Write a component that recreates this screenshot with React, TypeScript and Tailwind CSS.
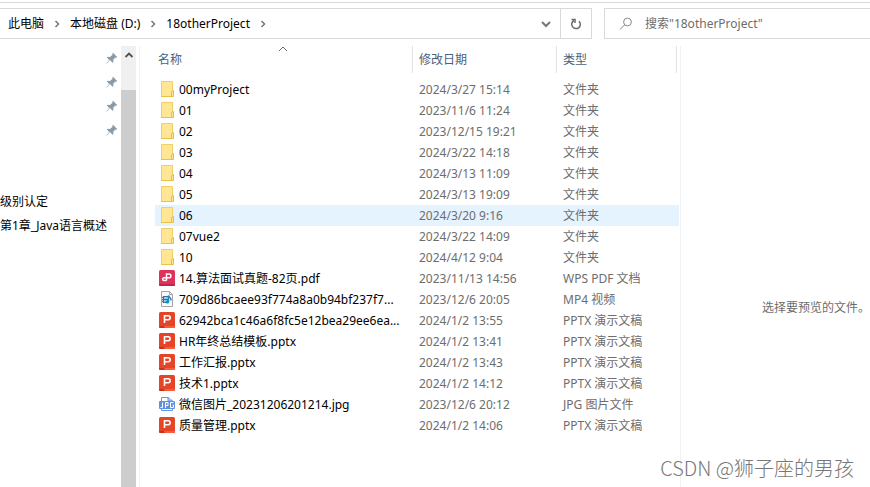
import type { ReactNode } from "react";

type Kind = "folder" | "pdf" | "video" | "ppt" | "jpg";

interface Entry {
  name: string;
  date: string;
  type: string;
  kind: Kind;
}

const entries: Entry[] = [
  { name: "00myProject", date: "2024/3/27 15:14", type: "文件夹", kind: "folder" },
  { name: "01", date: "2023/11/6 11:24", type: "文件夹", kind: "folder" },
  { name: "02", date: "2023/12/15 19:21", type: "文件夹", kind: "folder" },
  { name: "03", date: "2024/3/22 14:18", type: "文件夹", kind: "folder" },
  { name: "04", date: "2024/3/13 11:09", type: "文件夹", kind: "folder" },
  { name: "05", date: "2024/3/13 19:09", type: "文件夹", kind: "folder" },
  { name: "06", date: "2024/3/20 9:16", type: "文件夹", kind: "folder" },
  { name: "07vue2", date: "2024/3/22 14:09", type: "文件夹", kind: "folder" },
  { name: "10", date: "2024/4/12 9:04", type: "文件夹", kind: "folder" },
  { name: "14.算法面试真题-82页.pdf", date: "2023/11/13 14:56", type: "WPS PDF 文档", kind: "pdf" },
  { name: "709d86bcaee93f774a8a0b94bf237f7...", date: "2023/12/6 20:05", type: "MP4 视频", kind: "video" },
  { name: "62942bca1c46a6f8fc5e12bea29ee6ea...", date: "2024/1/2 13:55", type: "PPTX 演示文稿", kind: "ppt" },
  { name: "HR年终总结模板.pptx", date: "2024/1/2 13:41", type: "PPTX 演示文稿", kind: "ppt" },
  { name: "工作汇报.pptx", date: "2024/1/2 13:43", type: "PPTX 演示文稿", kind: "ppt" },
  { name: "技术1.pptx", date: "2024/1/2 14:12", type: "PPTX 演示文稿", kind: "ppt" },
  { name: "微信图片_20231206201214.jpg", date: "2023/12/6 20:12", type: "JPG 图片文件", kind: "jpg" },
  { name: "质量管理.pptx", date: "2024/1/2 14:06", type: "PPTX 演示文稿", kind: "ppt" },
];

const crumbs = ["此电脑", "本地磁盘 (D:)", "18otherProject"];

function FileIcon({ kind }: { kind: Kind }) {
  let art: ReactNode;
  if (kind === "folder") {
    art = (
      <>
        <path d="M2.5 .5h11v15h-11z" fill="#ffe694" stroke="#f0cf66" />
        <path d="M2 15.5h12" stroke="#e8c24a" />
        <path d="M12.5 10.5l2-1v6h-2z" fill="#ffe694" stroke="#e3be48" />
      </>
    );
  } else if (kind === "pdf") {
    art = (
      <>
        <rect width="16" height="16" rx="1.5" fill="#e0315b" />
        <path d="M0 14h16v.5a1.5 1.5 0 0 1-1.5 1.5h-13A1.5 1.5 0 0 1 0 14.5z" fill="#c4234e" />
        <path d="M7.500 10.500V4H10a1.900 1.900 0 0 1 0 3.800H5a1.300 1.300 0 0 0 0 2.700h2.500" fill="none" stroke="#fff" strokeWidth="1.500" />
      </>
    );
  } else if (kind === "video") {
    art = (
      <>
        <path d="M2.5.5h8l3 3v12h-11z" fill="#fafafa" stroke="#a5a5a5" />
        <path d="M10.5.5v3h3" fill="none" stroke="#a5a5a5" />
        <path d="M3 5h6v7H3z" fill="#596771" />
        <path d="M3.500 5v7" stroke="#dce7ed" strokeDasharray="1 1" />
        <path d="M5 6h4v2H5zM5 9h3v2H5z" fill="#8fd0f0" />
        <path d="M9.500 11V4.500c.5 2.300 3 2 2.500 5" fill="none" stroke="#168bce" strokeWidth="1.500" />
        <ellipse cx="8.300" cy="11" rx="1.900" ry="1.500" fill="#168bce" />
      </>
    );
  } else if (kind === "ppt") {
    art = (
      <>
        <rect width="16" height="16" rx="1.500" fill="#e54427" />
        <path d="M0 14h5l1 2H1.500A1.500 1.500 0 0 1 0 14.500z" fill="#c8321c" />
        <path d="M5 14h11v.5a1.500 1.500 0 0 1-1.500 1.500H6z" fill="#f85c38" />
        <path d="M5.500 11V3.800h3.700a1.900 1.900 0 0 1 0 3.900H5.500" fill="none" stroke="#fff" strokeWidth="1.600" />
      </>
    );
  } else {
    art = (
      <>
        <path d="M2.500 5V1.500h7l4 3.500M2.500 12v2.500h11V12" fill="#fff" stroke="#6997df" />
        <path d="M9 1v4h5" fill="#a9c8f4" stroke="#6997df" />
        <rect y="5" width="16" height="8" rx="1" fill="#5f90dd" />
        <path d="M1.500 11.500h2V6.500M6.500 12V6.500h2.500v3H6.500M14.500 6.500h-3v5h3v-2.500h-1" fill="none" stroke="#fff" />
      </>
    );
  }
  return (
    <svg className="mb-0.5 size-4 shrink-0" viewBox="0 0 16 16" aria-hidden="true">
      {art}
    </svg>
  );
}

function Chevron({ className }: { className: string }) {
  return (
    <svg className={className} viewBox="0 0 8 8" fill="none" stroke="currentColor" aria-hidden="true">
      <path d="M2.500 1L5.500 4L2.500 7" strokeWidth="1.500" />
    </svg>
  );
}

function Pin() {
  return (
    <svg className="size-3" viewBox="0 0 12 12" fill="#8a9aa6" aria-hidden="true">
      <path d="M7 .8L11.200 5l-1 .8-.7-.3-2.300 2.300.2 2.200-.9.700-2.600-2.600L.8 11.400l-.4-.3 2.900-3L.9 5.700l.9-.9 2.200.2 2.700-2.500-.5-.8z" />
    </svg>
  );
}

export default function App() {
  return (
    <div className="relative flex min-h-screen flex-col overflow-hidden bg-white pt-0.5 font-['Noto_Sans','Noto_Sans_CJK_SC',sans-serif] text-xs text-black">
      <header className="flex gap-3 border-t border-[#dadada] pt-[5px]">
        <div className="flex h-[31px] w-[592px] shrink-0 border border-l-0 border-[#d9d9d9]">
          <nav aria-label="路径" className="flex flex-1 items-center gap-[9px] pl-2">
            {crumbs.map((crumb) => (
              <span key={crumb} className="flex items-center gap-[9px]">
                <a href="#" className="whitespace-nowrap">{crumb}</a>
                <Chevron className="size-2 text-[#777]" />
              </span>
            ))}
          </nav>
          <button aria-label="历史记录" className="flex w-7 items-center justify-center">
            <svg className="size-3" viewBox="0 0 12 12" fill="none" stroke="#777" strokeWidth="2" aria-hidden="true">
              <path d="M2 4l4 4 4-4" />
            </svg>
          </button>
          <button aria-label="刷新" className="flex w-[31px] items-center justify-center border-l border-[#d9d9d9]">
            <svg className="size-3" viewBox="0 0 12 12" fill="none" stroke="#6b6b6b" strokeWidth="1.500" aria-hidden="true">
              <path d="M9 3.200A4.300 4.300 0 1 1 4 2.500" />
              <path d="M1.500 1.500H5V5" />
            </svg>
          </button>
        </div>
        <label className="flex h-[31px] min-w-0 flex-1 items-center gap-3 border border-r-0 border-[#d9d9d9] pl-3.5">
          <svg className="size-3.5 shrink-0" viewBox="0 0 14 14" fill="none" stroke="#888" aria-hidden="true">
            <circle cx="8.500" cy="5" r="3.900" />
            <path d="M5.700 7.800L1 12.500" />
          </svg>
          <input
            aria-label="搜索"
            placeholder={'搜索"18otherProject"'}
            className="min-w-0 flex-1 bg-transparent outline-none placeholder:text-[#6d6d6d]"
          />
        </label>
      </header>

      <main className="mt-[7px] flex flex-1">
        <aside className="flex w-[140px] shrink-0 border-r border-[#f2f2f2]">
          <div className="w-[121px]">
            <ul className="pb-12">
              {[1, 2, 3, 4].map((n) => (
                <li key={n} className="flex h-6 items-center justify-end pr-[3px]">
                  <Pin />
                </li>
              ))}
            </ul>
            <ul className="whitespace-nowrap leading-6">
              <li>级别认定</li>
              <li>第1章_Java语言概述</li>
            </ul>
          </div>
          <div className="flex w-[15px] flex-col bg-[#f0f0f0]">
            <button aria-label="向上滚动" className="flex h-11 justify-center pt-1">
              <svg className="size-2.5" viewBox="0 0 10 10" fill="none" stroke="#505050" strokeWidth="1.800" aria-hidden="true">
                <path d="M1.500 7L5 3.500 8.500 7" />
              </svg>
            </button>
            <div className="flex-1 bg-[#cdcdcd]" />
          </div>
        </aside>

        <section className="w-[541px] shrink-0 border-r border-[#f2f2f2] pl-[15px]">
          <table className="w-[524px] table-fixed border-collapse text-left text-[#6d6d6d]">
            <colgroup>
              <col className="w-[257px]" />
              <col className="w-36" />
              <col />
            </colgroup>
            <thead className="text-[#4c607a]">
              <tr className="h-[33px] align-top leading-[27px]">
                <th className="p-0 font-normal">
                  <div className="flex pl-[3px]">
                    <span className="w-[120px]">名称</span>
                    <svg className="h-1.5 w-2.5" viewBox="0 0 10 6" fill="none" stroke="#666" aria-hidden="true">
                      <path d="M1 5l4-4 4 4" />
                    </svg>
                  </div>
                </th>
                <th className="p-0 font-normal">
                  <div className="border-l border-[#e2e2e2] pl-1.5">修改日期</div>
                </th>
                <th className="p-0 pr-0.5 font-normal">
                  <div className="border-x border-[#e2e2e2] pl-1.5">类型</div>
                </th>
              </tr>
            </thead>
            <tbody>
              {entries.map((entry) => (
                <tr key={entry.name} className={entry.name === "06" ? "h-[21px] bg-[#e5f3ff]" : "h-[21px]"}>
                  <td className="p-0">
                    <div className="flex items-center gap-1 whitespace-nowrap pl-1 leading-5 text-black">
                      <FileIcon kind={entry.kind} />
                      {entry.name}
                    </div>
                  </td>
                  <td className="p-0 pl-[7px] leading-5">{entry.date}</td>
                  <td className="p-0 pl-[7px] leading-5">{entry.type}</td>
                </tr>
              ))}
            </tbody>
          </table>
        </section>

        <section aria-label="预览" className="flex min-w-0 flex-1 items-center justify-end pt-[82px]">
          <p className="whitespace-nowrap text-[#6d6d6d]">选择要预览的文件。</p>
        </section>
      </main>

      <p className="absolute bottom-[5px] right-4 whitespace-nowrap font-['Noto_Sans_CJK_SC',sans-serif] text-xl font-light text-[#777]">
        CSDN @狮子座的男孩
      </p>
    </div>
  );
}
